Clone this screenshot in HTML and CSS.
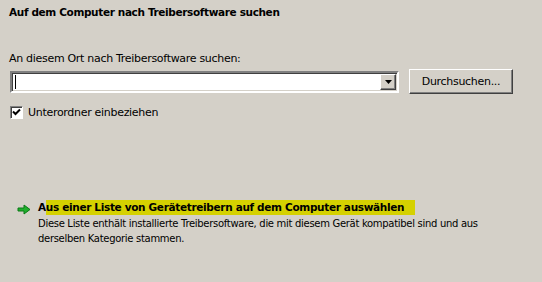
FILE: index.html
```html
<!DOCTYPE html>
<html>
<head><meta charset="utf-8"><link rel="stylesheet" href="styles.css"></head>
<body>
<div class="page">
  <div class="title">Auf dem Computer nach Treibersoftware suchen</div>
  <div class="label">An diesem Ort nach Treibersoftware suchen:</div>
  <div class="row">
    <div class="combo">
      <div class="combo-field"><span class="caret"></span></div>
      <div class="combo-btn"><svg width="7" height="4" viewBox="0 0 7 4"><path d="M0 0h7L3.5 4z" fill="#000"/></svg></div>
    </div>
    <div class="button">Durchsuchen...</div>
  </div>
  <div class="check-row">
    <span class="checkbox"><svg width="9" height="9" viewBox="0 0 9 9"><path d="M1 3.5L3.5 6 8 1.5" stroke="#000" stroke-width="2" fill="none"/></svg></span>
    <span>Unterordner einbeziehen</span>
  </div>
  <div class="link">
    <svg class="arrow" width="14" height="11" viewBox="0 0 14 11"><path d="M1 4h6V1l6 4.5L7 10V7H1z" fill="#1fae2c" stroke="#0a7a16" stroke-width="1"/></svg>
    <div class="link-body">
      <div class="link-title"><span class="hl-text">Aus einer Liste von Gerätetreibern auf dem Computer auswählen</span></div>
      <div class="desc">Diese Liste enthält installierte Treibersoftware, die mit diesem Gerät kompatibel sind und aus<br>derselben Kategorie stammen.</div>
    </div>
  </div>
</div>
</body>
</html>
```
FILE: styles.css
```css
html, body { margin: 0; background: #d4d0c8; }
.page {
  font-family: "DejaVu Sans", Tahoma, sans-serif;
  font-size: 11px;
  color: #000;
  padding: 5px 0 0 9px;
  width: 533px;
  height: 277px;
  display: flex;
  flex-direction: column;
}
.title { font-weight: bold; font-size: 10.5px; letter-spacing: -0.36px; line-height: 14px; color: #000; }
.label { margin-top: 33px; line-height: 14px; letter-spacing: -0.3px; }
.row { display: flex; align-items: center; margin-top: 3px; gap: 10px; }
.combo {
  width: 385px; height: 18px;
  display: flex; background: #fff;
  border: 2px solid; border-color: #808080 #fff #fff #808080;
  box-shadow: inset 1px 1px 0 #404040, inset -1px -1px 0 #d4d0c8;
  margin-left: 1px;
}
.combo-field { flex: 1; position: relative; }
.caret { position: absolute; left: 3px; top: 2px; width: 1px; height: 14px; background: #000; }
.combo-btn {
  width: 14px; margin: 1px 1px 1px 0; background: #d4d0c8;
  border: 1px solid; border-color: #fff #404040 #404040 #fff;
  box-shadow: inset -1px -1px 0 #808080;
  display: flex; align-items: center; justify-content: center;
}
.button {
  box-sizing: border-box;
  border: 1px solid; border-color: #fff #404040 #404040 #fff;
  box-shadow: inset -1px -1px 0 #808080;
  display: flex; align-items: center; justify-content: center;
  letter-spacing: -0.3px;
  width: 104px; height: 25px;
}
.check-row { display: flex; align-items: center; gap: 5px; margin-top: 12px; margin-left: 1px; letter-spacing: -0.3px; }
.checkbox {
  width: 13px; height: 13px; box-sizing: border-box; background: #fff;
  border: 1px solid; border-color: #808080 #fff #fff #808080;
  box-shadow: inset 1px 1px 0 #404040;
  display: flex; align-items: center; justify-content: center;
}
.link { display: flex; margin-top: 80px; margin-left: 8px; gap: 7px; }
.arrow { margin-top: 5px; }
.link-title { position: relative; font-weight: bold; font-size: 10.5px; letter-spacing: -0.33px; line-height: 17px; }
.link-title::before {
  content: ""; position: absolute; left: 8px; top: 1px; width: 369px; height: 15px;
  background: #d5d100;
}
.hl-text { position: relative; }
.desc { line-height: 15px; letter-spacing: -0.3px; font-size: 10px; }
```
